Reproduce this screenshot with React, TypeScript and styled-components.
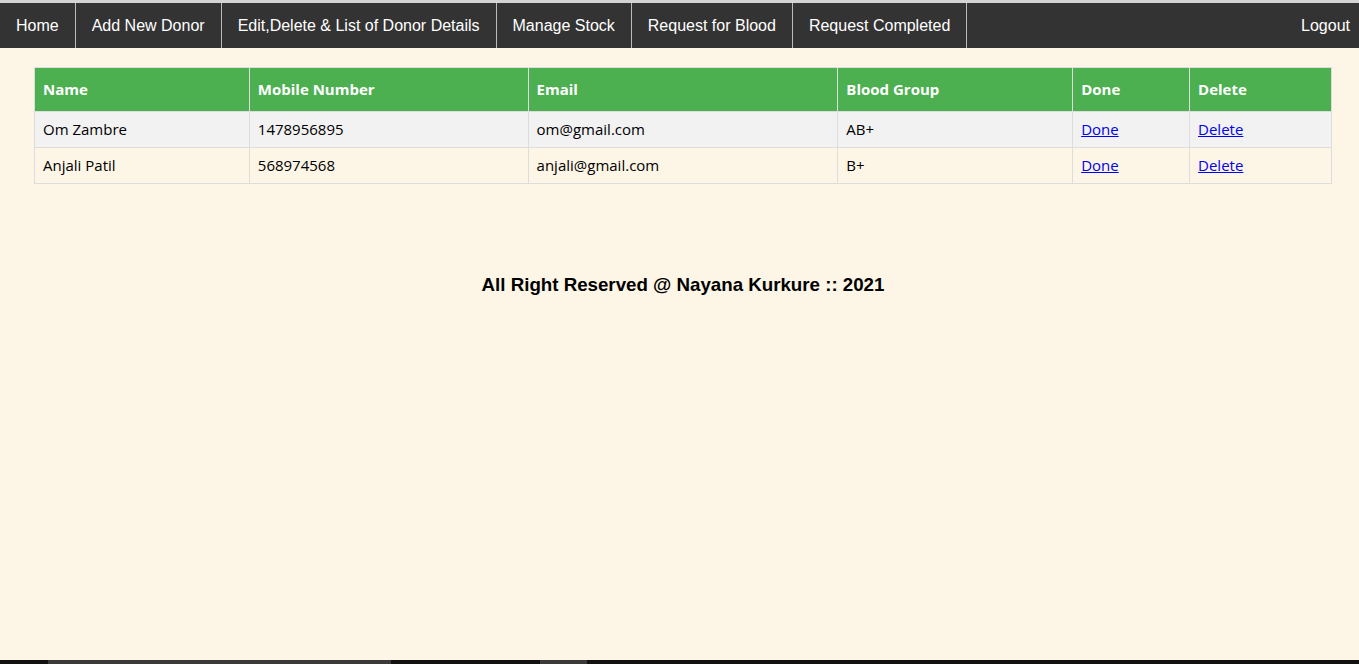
import styled, { createGlobalStyle } from "styled-components";

const GlobalStyle = createGlobalStyle`
    html, body {
        margin: 0;
        padding: 0;
        background: #fdf5e6;
    }
`;

const Page = styled.div`
    min-height: 100vh;
    display: flex;
    flex-direction: column;
    border-top: 3px solid #d3d3d3;
    box-sizing: border-box;
`;

const NavBar = styled.ul`
    list-style: none;
    margin: 0;
    padding: 0;
    display: flex;
    background: #333333;
    height: 45px;
`;

const NavItem = styled.li<{ $right?: boolean }>`
    display: flex;
    align-items: center;
    border-right: ${(p) => (p.$right ? "none" : "1px solid #bbbbbb")};
    margin-left: ${(p) => (p.$right ? "auto" : "0")};
`;

const NavLink = styled.a<{ $right?: boolean }>`
    color: #ffffff;
    text-decoration: none;
    font-family: "Liberation Sans", Arial, sans-serif;
    font-size: 16px;
    padding: ${(p) => (p.$right ? "0 9px 0 16px" : "0 16px")};
`;

const Content = styled.div`
    padding: 19px 27px 0 34px;
`;

const Table = styled.table`
    border-collapse: collapse;
    width: 100%;
    font-family: "Open Sans", "Noto Sans", sans-serif;
    font-size: 15px;
`;

const Th = styled.th`
    background: #4caf50;
    color: #ffffff;
    text-align: left;
    font-weight: bold;
    padding: 0 8px 1px;
    height: 42px;
    border: 1px solid #dddddd;
`;

const Row = styled.tr<{ $shade?: boolean }>`
    background: ${(p) => (p.$shade ? "#f2f2f2" : "transparent")};
`;

const Td = styled.td`
    padding: 0 8px 1px;
    height: 34px;
    border: 1px solid #dddddd;
    color: #000000;
`;

const Link = styled.a`
    color: #0000ee;
    text-decoration: underline;
`;

const Footer = styled.h3`
    text-align: center;
    font-family: "Liberation Sans", Arial, sans-serif;
    font-size: 18.72px;
    font-weight: bold;
    margin: 90px 0 0;
    color: #000000;
`;

const Spacer = styled.div`
    flex: 1;
`;

const TaskStrip = styled.div`
    height: 4px;
    background: #111111;
    display: flex;
`;

const StripPart = styled.div<{ $w: number; $lit?: boolean }>`
    width: ${(p) => p.$w}px;
    background: ${(p) => (p.$lit ? "#3a3a3a" : "transparent")};
`;

const links = [
    "Home",
    "Add New Donor",
    "Edit,Delete & List of Donor Details",
    "Manage Stock",
    "Request for Blood",
    "Request Completed",
];

const requests = [
    { name: "Om Zambre", mobile: "1478956895", email: "om@gmail.com", group: "AB+" },
    { name: "Anjali Patil", mobile: "568974568", email: "anjali@gmail.com", group: "B+" },
];

const App = () => {
    return (
        <Page>
            <GlobalStyle />
            <NavBar>
                {links.map((l) => (
                    <NavItem key={l}>
                        <NavLink href="#">{l}</NavLink>
                    </NavItem>
                ))}
                <NavItem $right>
                    <NavLink href="#" $right>Logout</NavLink>
                </NavItem>
            </NavBar>
            <Content>
                <Table>
                    <colgroup>
                        <col style={{ width: 215 }} />
                        <col style={{ width: 279 }} />
                        <col style={{ width: 310 }} />
                        <col style={{ width: 235 }} />
                        <col style={{ width: 117 }} />
                        <col style={{ width: 142 }} />
                    </colgroup>
                    <thead>
                        <tr>
                            <Th>Name</Th>
                            <Th>Mobile Number</Th>
                            <Th>Email</Th>
                            <Th>Blood Group</Th>
                            <Th>Done</Th>
                            <Th>Delete</Th>
                        </tr>
                    </thead>
                    <tbody>
                        {requests.map((r, i) => (
                            <Row key={r.mobile} $shade={i % 2 === 0}>
                                <Td>{r.name}</Td>
                                <Td>{r.mobile}</Td>
                                <Td>{r.email}</Td>
                                <Td>{r.group}</Td>
                                <Td><Link href="#">Done</Link></Td>
                                <Td><Link href="#">Delete</Link></Td>
                            </Row>
                        ))}
                    </tbody>
                </Table>
                <Footer>All Right Reserved @ Nayana Kurkure :: 2021</Footer>
            </Content>
            <Spacer />
            <TaskStrip>
                <StripPart $w={48} />
                <StripPart $w={343} $lit />
                <StripPart $w={149} />
                <StripPart $w={47} $lit />
            </TaskStrip>
        </Page>
    );
};

export default App;
